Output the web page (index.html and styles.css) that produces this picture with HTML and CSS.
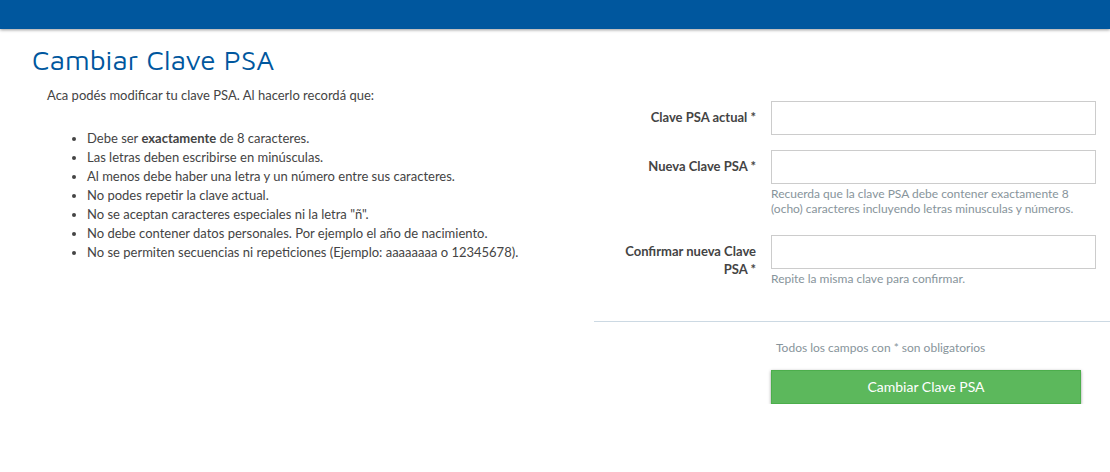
FILE: index.html
```html
<!DOCTYPE html>
<html lang="es">
<head>
<meta charset="utf-8">
<meta name="viewport" content="width=device-width, initial-scale=1">
<title>Cambiar Clave PSA</title>
<link rel="stylesheet" href="styles.css">
</head>
<body>
<header class="topbar"></header>
<main class="page">
  <h1 class="title">Cambiar Clave PSA</h1>
  <div class="columns">
    <section class="info">
      <p class="intro">Aca podés modificar tu clave PSA. Al hacerlo recordá que:</p>
      <ul class="rules">
        <li>Debe ser <strong>exactamente</strong> de 8 caracteres.</li>
        <li>Las letras deben escribirse en minúsculas.</li>
        <li>Al menos debe haber una letra y un número entre sus caracteres.</li>
        <li>No podes repetir la clave actual.</li>
        <li>No se aceptan caracteres especiales ni la letra "ñ".</li>
        <li>No debe contener datos personales. Por ejemplo el año de nacimiento.</li>
        <li>No se permiten secuencias ni repeticiones (Ejemplo: aaaaaaaa o 12345678).</li>
      </ul>
    </section>
    <form class="form">
      <div class="row">
        <label class="label" for="actual">Clave PSA actual *</label>
        <div class="field"><input class="input" id="actual" type="password" required></div>
      </div>
      <div class="row">
        <label class="label" for="nueva">Nueva Clave PSA *</label>
        <div class="field">
          <input class="input" id="nueva" type="password" aria-describedby="nueva-help" required>
          <p class="help" id="nueva-help">Recuerda que la clave PSA debe contener exactamente 8 (ocho) caracteres incluyendo letras minusculas y números.</p>
        </div>
      </div>
      <div class="row">
        <label class="label" for="confirmar">Confirmar nueva Clave PSA *</label>
        <div class="field">
          <input class="input" id="confirmar" type="password" aria-describedby="confirmar-help" required>
          <p class="help" id="confirmar-help">Repite la misma clave para confirmar.</p>
        </div>
      </div>
      <div class="actions">
        <p class="note">Todos los campos con * son obligatorios</p>
        <button class="submit" type="submit">Cambiar Clave PSA</button>
      </div>
    </form>
  </div>
</main>
</body>
</html>
```

FILE: styles.css
```css
* { box-sizing: border-box; }

body {
  margin: 0;
  background: #fff;
  color: #444;
  font: 13px/20px Lato, "Liberation Sans", sans-serif;
}

.topbar {
  height: 29px;
  background: #00579e;
  box-shadow: 0 1px 3px rgba(0, 0, 0, 0.4);
}

.page { padding-top: 15px; }

.title {
  margin: 0 0 0 32px;
  color: #00579e;
  font: 400 28px/32px "Maven Pro", "Open Sans", sans-serif;
}

.columns {
  display: grid;
  grid-template-columns: 594fr 516fr;
}

.info { padding: 9px 15px 0 47px; }

.intro { margin: 0 0 24px; }

.rules {
  margin: 0;
  padding-left: 40px;
  line-height: 19px;
}

.form { padding-top: 25px; }

.row {
  display: grid;
  grid-template-columns: 162px 1fr;
  column-gap: 15px;
  padding-right: 14px;
  margin-bottom: 15px;
}

.label {
  padding: 7px 0 0 20px;
  font-weight: 700;
  line-height: 18px;
  text-align: right;
}

.input {
  display: block;
  width: 100%;
  height: 34px;
  padding: 6px 12px;
  border: 1px solid #ccc;
  background: #fff;
  font: inherit;
}

.help {
  margin: 2px 0 4px;
  color: #87949b;
  font-size: 12px;
  line-height: 15px;
}

.actions {
  margin-top: 31px;
  padding: 16px 29px 0 177px;
  border-top: 1px solid #ccd9e3;
}

.note {
  margin: 0 0 12px 5px;
  color: #87949b;
  font-size: 12px;
}

.submit {
  display: block;
  width: 100%;
  height: 34px;
  border: 1px solid #4cae4c;
  background: #5cb85c;
  color: #fff;
  font: inherit;
  font-size: 14px;
  box-shadow: 0 1px 3px rgba(0, 0, 0, 0.4);
}
```
